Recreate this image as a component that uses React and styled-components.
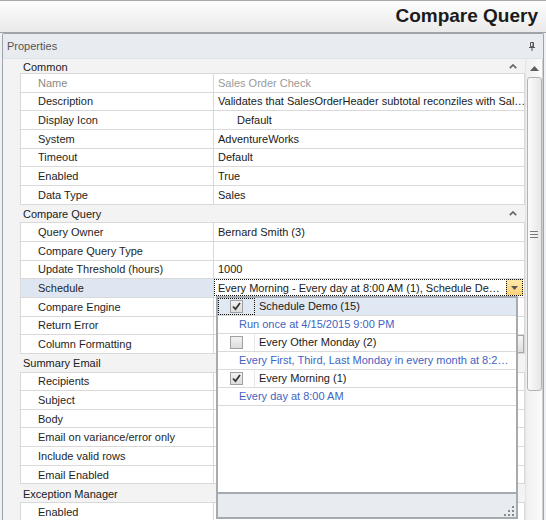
import React from 'react';
import styled, { createGlobalStyle } from 'styled-components';

const Global = createGlobalStyle`
  html, body { margin: 0; padding: 0; }
  body {
    width: 546px; height: 520px; overflow: hidden;
    background: #eef0f3;
    font-family: "Liberation Sans", Arial, sans-serif;
    font-size: 11px;
    color: #1e1e1e;
  }
`;

const Window = styled.div`
  width: 546px; height: 520px;
  display: flex; flex-direction: column;
  overflow: hidden;
`;

const TitleBar = styled.div`
  flex: none;
  height: 29px;
  padding: 0 8px 2px 0;
  border-top: 1px solid #a9a9a9;
  border-bottom: 1px solid #a3a3a3;
  background: linear-gradient(#fdfdfd, #eaeaea);
  display: flex; align-items: center; justify-content: flex-end;
  font-weight: bold; font-size: 19px; color: #1b1b1b;
`;

const Panel = styled.div`
  flex: 1; min-height: 0;
  margin: 0 2px;
  border: 1px solid #9ea4ac;
  border-bottom: none;
  border-radius: 2px 2px 0 0;
  display: flex; flex-direction: column;
  background: #fff;
`;

const PanelHeader = styled.div`
  flex: none;
  height: 24px;
  padding: 0 8px 0 4px;
  background: #e8ebef;
  display: flex; align-items: center; justify-content: space-between;
  color: #555;
`;

const PanelBody = styled.div`
  flex: 1; min-height: 0;
  display: flex;
  border-top: 1px solid #dfe2e6;
  overflow: hidden;
`;

const Grid = styled.div`
  flex: 1; min-width: 0;
  display: flex; flex-direction: column;
`;

const CategoryRow = styled.div`
  flex: none;
  height: ${p => (p.$first ? '15px' : '18.67px')};
  box-sizing: border-box;
  padding: 0 8px 0 20px;
  display: flex; align-items: center; justify-content: space-between;
  background-color: #f3f3f3;
  background-image: linear-gradient(#d9d9d9, #d9d9d9);
  background-size: calc(100% - 17px) 1px;
  background-position: right bottom;
  background-repeat: no-repeat;
  color: #202020;
`;

const PropRow = styled.div`
  flex: none;
  height: 18.67px;
  display: grid;
  grid-template-columns: 17px 194px 1fr;
`;

const Gutter = styled.div`
  background: #f3f3f3;
`;

const NameCell = styled.div`
  box-sizing: border-box;
  padding-left: 17px;
  border-left: 1px solid #d9d9d9;
  border-right: 1px solid #d9d9d9;
  border-bottom: 1px solid #d9d9d9;
  background: ${p => (p.$selected ? '#dee7f1' : '#fff')};
  color: ${p => (p.$readOnly ? '#8a8a8a' : '#1e1e1e')};
  display: flex; align-items: center;
  white-space: nowrap; overflow: hidden;
`;

const ValueCell = styled.div`
  position: relative;
  box-sizing: border-box;
  padding-left: ${p => (p.$editing ? '0' : '4px')};
  border-right: 1px solid #d9d9d9;
  border-bottom: 1px solid #d9d9d9;
  color: ${p => (p.$readOnly ? '#9a9a9a' : '#1a1a1a')};
  display: flex; align-items: center;
  white-space: nowrap;
  min-width: 0;
`;

const ValueText = styled.span`
  flex: 1; min-width: 0;
  overflow: hidden;
  padding-left: ${p => (p.$indent ? '19px' : '0')};
`;

const EllipsisButton = styled.div`
  flex: none;
  align-self: stretch;
  width: 17px;
  box-sizing: border-box;
  border: 1px solid #a8a8a8;
  background: linear-gradient(#f6f6f6, #dedede);
`;

const Editor = styled.div`
  flex: 1;
  align-self: stretch;
  margin: 0 1px 1px 0;
  box-sizing: border-box;
  border: 1px dotted #111;
  display: flex; align-items: center;
  padding-left: 3px;
  min-width: 0;
`;

const DropButton = styled.div`
  flex: none;
  align-self: stretch;
  width: 15px;
  margin: -1px -1px -1px 0;
  border: 1px dotted #111;
  background: linear-gradient(#ffe9a8, #fcd27a);
  display: flex; align-items: center; justify-content: center;
`;

const Popup = styled.div`
  position: absolute;
  z-index: 5;
  top: calc(100% - 1px);
  left: 2px;
  width: 302px;
  height: 223px;
  box-sizing: border-box;
  border: 2px solid #a6aab1;
  background: #fff;
  display: flex; flex-direction: column;
`;

const OptionList = styled.div`
  flex: 1;
  display: flex; flex-direction: column;
`;

const OptionRow = styled.div`
  flex: none;
  height: 18px;
  box-sizing: border-box;
  border-bottom: 1px solid #dadada;
  display: grid;
  grid-template-columns: 37px 1fr;
  background: ${p => (p.$active ? '#dfe8f3' : '#fff')};
  color: #1a1a1a;
`;

const CheckCell = styled.div`
  box-sizing: border-box;
  border-right: 1px solid #e8e8e8;
  outline: ${p => (p.$focused ? '1px dotted #111' : 'none')};
  outline-offset: -1px;
  display: flex; align-items: center; justify-content: center;
`;

const CheckBox = styled.div`
  width: 13px; height: 13px;
  box-sizing: border-box;
  border: 1px solid #a0a0a0;
  background: linear-gradient(#f2f2f2, #dcdcdc);
  display: flex; align-items: center; justify-content: center;
`;

const OptionLabel = styled.div`
  padding-left: 4px;
  display: flex; align-items: center;
  white-space: nowrap;
`;

const DescRow = styled.div`
  flex: none;
  height: 18px;
  box-sizing: border-box;
  border-bottom: 1px solid #dadada;
  padding-left: 21px;
  display: flex; align-items: center;
  color: #4164c3;
  white-space: nowrap; overflow: hidden;
`;

const PopupFooter = styled.div`
  flex: none;
  height: 22px;
  border-top: 2px solid #a6aab1;
  background: #e8ebef;
  display: flex; align-items: flex-end; justify-content: flex-end;
  padding: 0 2px 1px 0;
`;

const Scrollbar = styled.div`
  flex: none;
  width: 16px;
  border-left: 1px solid #e4e4e4;
  border-right: 1px solid #cfcfcf;
  background: linear-gradient(to right, #efefef, #fbfbfb);
  display: flex; flex-direction: column; align-items: center;
`;

const ScrollArrow = styled.div`
  flex: none;
  height: 18px;
  display: flex; align-items: center; justify-content: center;
`;

const Thumb = styled.div`
  flex: none;
  width: 15px;
  height: 314px;
  box-sizing: border-box;
  border: 1px solid #b3b3b3;
  border-radius: 3px;
  background: linear-gradient(to right, #fbfbfb, #e6e6e6);
  display: flex; align-items: center; justify-content: center;
`;

const Pin = () => (
  <svg width="6" height="9" viewBox="0 0 6 9">
    <path d="M1.5 0.5h3v4h-3z" fill="none" stroke="#555" />
    <path d="M0 5h6v1H0z M2.5 6h1v3h-1z M3.5 1h1v4h-1z" fill="#555" />
  </svg>
);

const Chevron = () => (
  <svg width="8" height="5" viewBox="0 0 8 5">
    <polyline points="0.8,4.2 4,1 7.2,4.2" fill="none" stroke="#666" strokeWidth="1.7" />
  </svg>
);

const UpArrow = () => (
  <svg width="9" height="5" viewBox="0 0 9 5">
    <path d="M0 5 L4.5 0 L9 5 Z" fill="#5e5e5e" />
  </svg>
);

const DownArrow = () => (
  <svg width="7" height="4" viewBox="0 0 7 4">
    <path d="M0 0 H7 L3.5 4 Z" fill="#555" />
  </svg>
);

const Grip = () => (
  <svg width="8" height="7" viewBox="0 0 8 7">
    <path d="M0 0.5h8M0 3.5h8M0 6.5h8" stroke="#777" strokeWidth="1" />
  </svg>
);

const Check = () => (
  <svg width="9" height="9" viewBox="0 0 9 9">
    <path d="M1 4.5 L3.5 7.2 L8 1" fill="none" stroke="#333" strokeWidth="1.8" />
  </svg>
);

const SizeGrip = () => (
  <svg width="10" height="10" viewBox="0 0 10 10">
    <g fill="#8a8a8a">
      <rect x="8" y="0" width="2" height="2" />
      <rect x="4" y="4" width="2" height="2" />
      <rect x="8" y="4" width="2" height="2" />
      <rect x="0" y="8" width="2" height="2" />
      <rect x="4" y="8" width="2" height="2" />
      <rect x="8" y="8" width="2" height="2" />
    </g>
  </svg>
);

const scheduleOptions = [
  { label: 'Schedule Demo (15)', desc: 'Run once at 4/15/2015 9:00 PM', checked: true, active: true },
  { label: 'Every Other Monday (2)', desc: 'Every First, Third, Last Monday in every month at 8:2…', checked: false },
  { label: 'Every Morning (1)', desc: 'Every day at 8:00 AM', checked: true },
];

const sections = [
  {
    title: 'Common',
    rows: [
      { name: 'Name', value: 'Sales Order Check', readOnly: true },
      { name: 'Description', value: 'Validates that SalesOrderHeader subtotal reconziles with Sal…' },
      { name: 'Display Icon', value: 'Default', indent: true },
      { name: 'System', value: 'AdventureWorks' },
      { name: 'Timeout', value: 'Default' },
      { name: 'Enabled', value: 'True' },
      { name: 'Data Type', value: 'Sales' },
    ],
  },
  {
    title: 'Compare Query',
    rows: [
      { name: 'Query Owner', value: 'Bernard Smith (3)' },
      { name: 'Compare Query Type', value: '' },
      { name: 'Update Threshold (hours)', value: '1000' },
      { name: 'Schedule', value: 'Every Morning - Every day at 8:00 AM (1), Schedule De…', editing: true },
      { name: 'Compare Engine', value: '' },
      { name: 'Return Error', value: '' },
      { name: 'Column Formatting', value: '', button: true },
    ],
  },
  {
    title: 'Summary Email',
    rows: [
      { name: 'Recipients' },
      { name: 'Subject' },
      { name: 'Body' },
      { name: 'Email on variance/error only' },
      { name: 'Include valid rows' },
      { name: 'Email Enabled' },
    ],
  },
  {
    title: 'Exception Manager',
    rows: [{ name: 'Enabled' }],
  },
];

const ScheduleDropdown = () => (
  <Popup>
    <OptionList>
      {scheduleOptions.map(o => (
        <React.Fragment key={o.label}>
          <OptionRow $active={o.active}>
            <CheckCell $focused={o.active}>
              <CheckBox>{o.checked && <Check />}</CheckBox>
            </CheckCell>
            <OptionLabel>{o.label}</OptionLabel>
          </OptionRow>
          <DescRow>{o.desc}</DescRow>
        </React.Fragment>
      ))}
    </OptionList>
    <PopupFooter>
      <SizeGrip />
    </PopupFooter>
  </Popup>
);

const Property = ({ row }) => (
  <PropRow>
    <Gutter />
    <NameCell $readOnly={row.readOnly} $selected={row.editing}>{row.name}</NameCell>
    <ValueCell $readOnly={row.readOnly} $editing={row.editing}>
      {row.editing ? (
        <>
          <Editor>
            <ValueText>{row.value}</ValueText>
            <DropButton><DownArrow /></DropButton>
          </Editor>
          <ScheduleDropdown />
        </>
      ) : (
        <>
          <ValueText $indent={row.indent}>{row.value}</ValueText>
          {row.button && <EllipsisButton />}
        </>
      )}
    </ValueCell>
  </PropRow>
);

export default function App() {
  return (
    <Window>
      <Global />
      <TitleBar>Compare Query</TitleBar>
      <Panel>
        <PanelHeader>
          <span>Properties</span>
          <Pin />
        </PanelHeader>
        <PanelBody>
          <Grid>
            {sections.map((s, i) => (
              <React.Fragment key={s.title}>
                <CategoryRow $first={i === 0}>
                  <span>{s.title}</span>
                  <Chevron />
                </CategoryRow>
                {s.rows.map(r => (
                  <Property key={s.title + r.name} row={r} />
                ))}
              </React.Fragment>
            ))}
          </Grid>
          <Scrollbar>
            <ScrollArrow><UpArrow /></ScrollArrow>
            <Thumb><Grip /></Thumb>
          </Scrollbar>
        </PanelBody>
      </Panel>
    </Window>
  );
}
